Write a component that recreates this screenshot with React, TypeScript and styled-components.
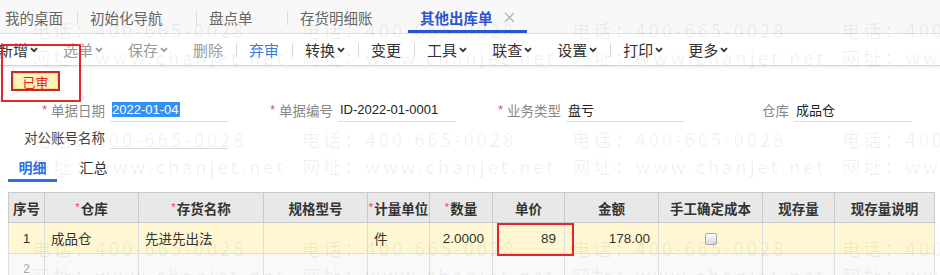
import React from 'react';
import styled, { createGlobalStyle } from 'styled-components';

const GlobalStyle = createGlobalStyle`
  html, body { margin: 0; padding: 0; background: #fff; }
  body { font-family: "Liberation Sans", "Noto Sans CJK SC", sans-serif; }
  * { box-sizing: border-box; }
`;

const Page = styled.div`
  position: relative;
  width: 940px;
  height: 275px;
  overflow: hidden;
  background: #fff;
  color: #333;
`;

/* ---------- top tabs ---------- */
const TabBar = styled.div`
  height: 34px;
  background: #f8f8f8;
  border-bottom: 1px solid #dde1e8;
  display: flex;
`;

const Tabs = styled.div`
  display: flex;
  margin-left: -7px;
`;

const Tab = styled.div<{ $w: number; $active?: boolean; $sep?: boolean }>`
  position: relative;
  width: ${p => p.$w}px;
  height: 33px;
  padding: 2px 0 0 12px;
  display: flex;
  align-items: center;
  gap: 11px;
  font-size: 14.5px;
  font-weight: ${p => (p.$active ? 700 : 400)};
  color: ${p => (p.$active ? '#2a55d4' : '#666')};
  &::after {
    content: '';
    display: ${p => (p.$sep ? 'block' : 'none')};
    position: absolute;
    right: 0;
    top: 11px;
    width: 1px;
    height: 14px;
    background: #dcdcdc;
  }
  &::before {
    content: '';
    display: ${p => (p.$active ? 'block' : 'none')};
    position: absolute;
    left: 0;
    right: 0;
    bottom: 0;
    height: 3px;
    background: #2a55d4;
  }
`;

/* ---------- toolbar ---------- */
const Toolbar = styled.div`
  height: 32px;
  border-bottom: 1px solid #d6d6d6;
  box-shadow: 0 1px 2px rgba(0, 0, 0, 0.1);
  display: flex;
  align-items: center;
  background: #fff;
  position: relative;
`;

const ToolList = styled.div`
  display: flex;
  align-items: center;
  margin-left: -14.5px;
`;

const ToolItem = styled.div<{ $tone?: 'normal' | 'muted' | 'link' }>`
  padding: 0 12.5px;
  display: flex;
  align-items: center;
  gap: 2px;
  font-size: 15px;
  white-space: nowrap;
  color: ${p => (p.$tone === 'muted' ? '#9a9a9a' : p.$tone === 'link' ? '#3a7be0' : '#333')};
  svg { display: block; }
`;

const ToolSep = styled.div`
  width: 1px;
  height: 14px;
  background: #d8d8d8;
`;

/* ---------- status ---------- */
const StatusRow = styled.div`
  padding: 5px 0 0 11px;
  display: flex;
`;

const Badge = styled.div`
  width: 49px;
  height: 20px;
  background: #fff3b8;
  border: 2px solid #c8282a;
  box-shadow: inset 0 0 0 1px #f7d98a;
  color: #e0242a;
  font-size: 13px;
  display: flex;
  align-items: center;
  justify-content: center;
`;

/* ---------- form ---------- */
const FormGrid = styled.div`
  margin-top: 7px;
  display: grid;
  grid-template-columns: repeat(4, 228px);
  grid-auto-rows: 24px;
  row-gap: 3px;
`;

const Field = styled.div`
  display: grid;
  grid-template-columns: 105px 118px;
  column-gap: 5px;
  align-items: stretch;
`;

const Label = styled.div<{ $dark?: boolean }>`
  display: flex;
  align-items: center;
  justify-content: flex-end;
  gap: 4px;
  font-size: 13.5px;
  color: ${p => (p.$dark ? '#444' : '#888')};
  white-space: nowrap;
`;

const Star = styled.span`
  color: #e2474b;
  font-size: 12px;
  line-height: 1;
`;

const Input = styled.div`
  border-bottom: 1px solid #dcdcdc;
  display: flex;
  align-items: center;
  padding-left: 2px;
  font-size: 13px;
  color: #222;
  white-space: nowrap;
`;

const Selected = styled.span`
  background: #3391f5;
  color: #fff;
  line-height: 15px;
  padding: 0 1px 0 0;
`;

/* ---------- detail tabs ---------- */
const DetailTabs = styled.div`
  margin: 6px 0 0 8px;
  display: flex;
  gap: 12px;
`;

const DetailTab = styled.div<{ $active?: boolean }>`
  width: 49px;
  height: 27px;
  border-bottom: 3px solid ${p => (p.$active ? '#2f6fe0' : 'transparent')};
  display: flex;
  align-items: center;
  justify-content: center;
  font-size: 14px;
  font-weight: ${p => (p.$active ? 700 : 400)};
  color: ${p => (p.$active ? '#2f6fe0' : '#333')};
`;

/* ---------- table ---------- */
const Table = styled.table`
  margin: 10px 0 0 8px;
  width: 926px;
  table-layout: fixed;
  border-collapse: collapse;
  font-size: 13.5px;
  border: 1px solid #c9c9c9;
`;

const Th = styled.th`
  height: 30px;
  padding: 0;
  background: #e8e8e8;
  border: 1px solid #c9c9c9;
  font-weight: 700;
  color: #333;
  text-align: center;
  white-space: nowrap;
  overflow: visible;
`;

const ThStar = styled.span`
  color: #e2474b;
  font-size: 11px;
  font-weight: 400;
  vertical-align: 3px;
  margin-right: 1px;
`;

const Tr = styled.tr<{ $bg: string }>`
  background: ${p => p.$bg};
`;

const Td = styled.td<{ $align?: 'left' | 'right' | 'center'; $muted?: boolean }>`
  height: 31px;
  padding: 0 ${p => (p.$align === 'right' ? 8 : 6)}px 0 6px;
  border: 1px solid #dedede;
  text-align: ${p => p.$align ?? 'left'};
  color: ${p => (p.$muted ? '#aaa' : '#333')};
  font-size: ${p => (p.$muted ? '12px' : '13.5px')};
  white-space: nowrap;
`;

const Check = styled.span`
  display: inline-block;
  width: 12px;
  height: 12px;
  border: 1px solid #a9a9a9;
  border-radius: 2px;
  background: linear-gradient(#fafafa, #dcdcdc);
  vertical-align: middle;
`;

/* ---------- overlays ---------- */
const Watermark = styled.div`
  position: absolute;
  top: 17px;
  left: 32px;
  display: grid;
  grid-template-columns: repeat(4, 270px);
  grid-auto-rows: 109px;
  pointer-events: none;
  font-family: "Noto Sans CJK SC", sans-serif;
  font-size: 18px;
  letter-spacing: 3.2px;
  line-height: 27px;
  color: rgba(0, 0, 0, 0.065);
  white-space: nowrap;
`;

const Callout = styled.div<{ $x: number; $y: number; $w: number; $h: number }>`
  position: absolute;
  left: ${p => p.$x}px;
  top: ${p => p.$y}px;
  width: ${p => p.$w}px;
  height: ${p => p.$h}px;
  border: 2px solid #e3262b;
  pointer-events: none;
`;

const Chevron = () => (
  <svg width="8" height="6" viewBox="0 0 8 6">
    <path d="M1 1.2l3 3 3-3" stroke="currentColor" strokeWidth="1.8" fill="none" />
  </svg>
);

const CloseIcon = () => (
  <svg width="11" height="11" viewBox="0 0 11 11">
    <path d="M1 1l9 9M10 1l-9 9" stroke="#b5b5b5" strokeWidth="1.3" fill="none" />
  </svg>
);

type Tool = { label: string; tone?: 'normal' | 'muted' | 'link'; menu?: boolean } | 'sep';
const tools: Tool[] = [
  { label: '新增', menu: true },
  { label: '选单', tone: 'muted', menu: true },
  { label: '保存', tone: 'muted', menu: true },
  { label: '删除', tone: 'muted' },
  'sep',
  { label: '弃审', tone: 'link' },
  'sep',
  { label: '转换', menu: true },
  'sep',
  { label: '变更' },
  'sep',
  { label: '工具', menu: true },
  { label: '联查', menu: true },
  { label: '设置', menu: true },
  'sep',
  { label: '打印', menu: true },
  { label: '更多', menu: true },
];

const cols = [36, 94, 125, 104, 62, 63, 72, 94, 104, 72, 100];
const headers: { t: string; req?: boolean }[] = [
  { t: '序号' },
  { t: '仓库', req: true },
  { t: '存货名称', req: true },
  { t: '规格型号' },
  { t: '计量单位', req: true },
  { t: '数量', req: true },
  { t: '单价' },
  { t: '金额' },
  { t: '手工确定成本' },
  { t: '现存量' },
  { t: '现存量说明' },
];

export default function App() {
  return (
    <Page>
      <GlobalStyle />
      <TabBar>
        <Tabs>
          <Tab $w={85} $sep>我的桌面</Tab>
          <Tab $w={119} $sep>初始化导航</Tab>
          <Tab $w={91} $sep>盘点单</Tab>
          <Tab $w={120}>存货明细账</Tab>
          <Tab $w={119} $active>
            其他出库单
            <CloseIcon />
          </Tab>
        </Tabs>
      </TabBar>

      <Toolbar>
        <ToolList>
          {tools.map((t, i) =>
            t === 'sep' ? (
              <ToolSep key={i} />
            ) : (
              <ToolItem key={i} $tone={t.tone}>
                {t.label}
                {t.menu && <Chevron />}
              </ToolItem>
            )
          )}
        </ToolList>
      </Toolbar>

      <StatusRow>
        <Badge>已审</Badge>
      </StatusRow>

      <FormGrid>
        <Field>
          <Label><Star>*</Star>单据日期</Label>
          <Input><Selected>2022-01-04</Selected></Input>
        </Field>
        <Field>
          <Label><Star>*</Star>单据编号</Label>
          <Input>ID-2022-01-0001</Input>
        </Field>
        <Field>
          <Label><Star>*</Star>业务类型</Label>
          <Input>盘亏</Input>
        </Field>
        <Field>
          <Label>仓库</Label>
          <Input>成品仓</Input>
        </Field>
        <Field>
          <Label $dark>对公账号名称</Label>
          <Input />
        </Field>
      </FormGrid>

      <DetailTabs>
        <DetailTab $active>明细</DetailTab>
        <DetailTab>汇总</DetailTab>
      </DetailTabs>

      <Table>
        <colgroup>
          {cols.map((w, i) => (
            <col key={i} style={{ width: w }} />
          ))}
        </colgroup>
        <thead>
          <tr>
            {headers.map(h => (
              <Th key={h.t}>
                {h.req && <ThStar>*</ThStar>}
                {h.t}
              </Th>
            ))}
          </tr>
        </thead>
        <tbody>
          <Tr $bg="#fff7d2">
            <Td $align="center">1</Td>
            <Td>成品仓</Td>
            <Td>先进先出法</Td>
            <Td />
            <Td>件</Td>
            <Td $align="right">2.0000</Td>
            <Td $align="right">89</Td>
            <Td $align="right">178.00</Td>
            <Td $align="center"><Check /></Td>
            <Td />
            <Td />
          </Tr>
          <Tr $bg="#f9f9f9">
            <Td $align="center" $muted>2</Td>
            <Td />
            <Td />
            <Td />
            <Td />
            <Td />
            <Td />
            <Td />
            <Td />
            <Td />
            <Td />
          </Tr>
        </tbody>
      </Table>

      <Watermark>
        {Array.from({ length: 12 }).map((_, i) => (
          <div key={i}>
            <div>电话：400-665-0028</div>
            <div>网址：www.chanjet.net</div>
          </div>
        ))}
      </Watermark>

      <Callout $x={1} $y={44} $w={80} $h={58} />
      <Callout $x={497} $y={223} $w={77} $h={33} />
    </Page>
  );
}
